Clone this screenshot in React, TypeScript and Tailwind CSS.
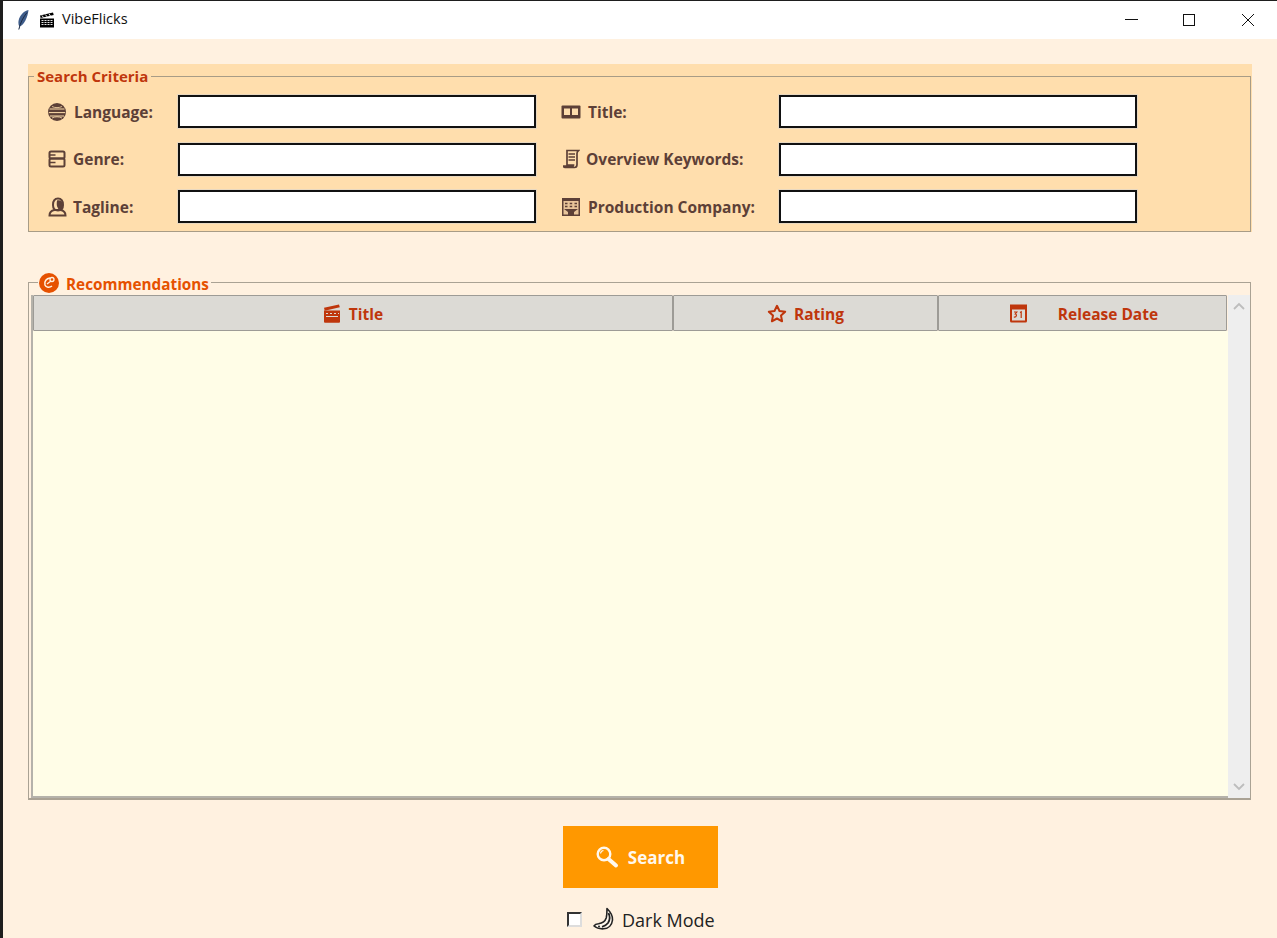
import React from "react";

const BROWN = "#5D4037";
const RED = "#BF360C";
const ORANGE = "#E65100";

function Globe() {
  return (
    <svg width="20" height="20" viewBox="0 0 20 20" fill="none">
      <circle cx="10" cy="10" r="9" fill={BROWN} />
      <path d="M2.500 7h15M1.800 10.600h16.400M3 14h14" stroke="#FFDEAD" strokeWidth="1" />
      <path d="M5 4.500C8 6 12 6 15 4.500M5 16c3-1.600 7-1.600 10 0" stroke="#FFDEAD" strokeWidth="0.800" />
    </svg>
  );
}
function Genre() {
  return (
    <svg width="18" height="18" viewBox="0 0 18 18" fill="none" stroke={BROWN} strokeWidth="2">
      <rect x="1.500" y="1.500" width="15" height="7" rx="1.500" />
      <rect x="1.500" y="8.500" width="15" height="8" rx="1.500" />
      <path d="M1.500 5h6M1.500 12.500h6" strokeWidth="1.500" />
    </svg>
  );
}
function Tagline() {
  return (
    <svg width="19" height="20" viewBox="0 0 19 20" fill="none">
      <path d="M5 8c0-4 2-6.500 5-6.500S15 4 15 8s-2 5.500-5 5.500S5 12 5 8z" fill="none" stroke={BROWN} strokeWidth="2" />
      <path d="M9 3.500c3-1 6 1 6 4.500 0 4-2 5-4 5-1-2.500-3-3-2-9.500z" fill={BROWN} />
      <path d="M1.500 18.500c0-3.500 2.500-5 5-5.500h6c2.500.5 5 2 5 5.500z" fill="none" stroke={BROWN} strokeWidth="2" />
    </svg>
  );
}
function Ticket() {
  return (
    <svg width="20" height="14" viewBox="0 0 20 14">
      <rect x="0.500" y="0.500" width="19" height="13" rx="1" fill={BROWN} />
      <rect x="3" y="3.500" width="6" height="6.500" fill="#FFDEAD" />
      <rect x="11" y="3.500" width="6" height="6.500" fill="#FFDEAD" />
    </svg>
  );
}
function Scroll() {
  return (
    <svg width="17" height="20" viewBox="0 0 17 20" fill="none" stroke={BROWN} strokeWidth="1.700">
      <path d="M4 1.500h11.500c-1.200 1-1.500 2-1.500 3v11c0 2-1 3-2.500 3H2c-1 0-1.500-.7-1.300-1.500h9.500c.3-.2.300-.8.300-1H4z" />
      <path d="M5.500 5h6.500M5.500 8h6.500M5.500 11h6.500" strokeWidth="1.300" />
    </svg>
  );
}
function Building() {
  return (
    <svg width="20" height="20" viewBox="0 0 20 20">
      <rect x="1" y="1" width="18" height="18" fill={BROWN} />
      <rect x="2.500" y="4" width="15" height="13.500" fill="#E8C49A" />
      <path d="M4 6.500h2.500M8.700 6.500h2.500M13.500 6.500H16M4 9.500h2.500M8.700 9.500h2.500M13.500 9.500H16" stroke={BROWN} strokeWidth="1.500" />
      <path d="M3 12h14l-4 3v3H7v-3z" fill={BROWN} />
    </svg>
  );
}
function Palette() {
  return (
    <svg width="20" height="20" viewBox="0 0 20 20">
      <circle cx="10" cy="10" r="10" fill={ORANGE} />
      <path d="M11 5C7.500 5.500 5 8 6 12c1 2.500 4.500 3 7 1" fill="none" stroke="#FFF1E0" strokeWidth="1.600" />
      <circle cx="13" cy="6.500" r="2" fill="none" stroke="#FFF1E0" strokeWidth="1.300" />
      <path d="M8 11l4-3" stroke="#FFF1E0" strokeWidth="1.300" />
    </svg>
  );
}
function Clapper() {
  return (
    <svg width="18" height="19" viewBox="0 0 18 19">
      <path d="M1 3.800L16 .5l.8 2.700L1.700 6.800z" fill={RED} />
      <path d="M1 6.500h16v11.200a1 1 0 0 1-1 1H2a1 1 0 0 1-1-1z" fill={RED} />
      <path d="M3 9.500h2M7 9.500h2M11 9.500h2M15 9.500h1M3 12.500h12" stroke="#DCDAD5" strokeWidth="1.100" />
    </svg>
  );
}
function Star() {
  return (
    <svg width="20" height="19" viewBox="0 0 20 19" fill="none">
      <path d="M10 1.800l2.500 5.200 5.700.7-4.200 3.900 1.100 5.700-5.100-2.800-5.100 2.800 1.100-5.700-4.200-3.900 5.700-.7z" stroke={RED} strokeWidth="2" strokeLinejoin="round" />
    </svg>
  );
}
function Calendar() {
  return (
    <svg width="19" height="20" viewBox="0 0 19 20">
      <path d="M1 1.500h17v16.500a1.500 1.500 0 0 1-1.500 1.500h-14A1.500 1.500 0 0 1 1 18z" fill={RED} />
      <rect x="3" y="6.500" width="13" height="11" fill="#DCDAD5" />
      <path d="M5 9h2.800l-1.500 2c1.600 0 1.800 3.500-1.500 3M11 9.500l1.200-.7V15" fill="none" stroke={RED} strokeWidth="1.200" />
    </svg>
  );
}
function Magnifier() {
  return (
    <svg width="24" height="24" viewBox="0 0 24 24" fill="none">
      <circle cx="9" cy="9" r="6.300" stroke="#FFF8EE" strokeWidth="2.400" />
      <path d="M13.500 14l7.500 6.500" stroke="#FFF8EE" strokeWidth="4" strokeLinecap="round" />
      <path d="M5.500 8.500c.3-1.700 1.500-2.800 3-3" stroke="#FFF8EE" strokeWidth="1.200" />
    </svg>
  );
}
function Moon() {
  return (
    <svg width="24" height="24" viewBox="0 0 24 24" fill="none">
      <path d="M15 1.500c2 2 6 6 5.500 11.500-.5 5-4 8.500-9 8.800-3.500.2-7-.7-9.500-2.800 1-1.500 2.500-2 4.500-2.200 4-.5 6.500-2 7.800-6 .7-3 .7-6.500.7-9.300z" fill="#FFF8EE" stroke="#222" strokeWidth="1.600" strokeLinejoin="round" />
      <path d="M16.500 6c1.500 3 1.500 7-.5 10-1.500 2-3.500 3-6 3.800" stroke="#222" strokeWidth="1.800" fill="none" />
      <circle cx="7" cy="19.500" r="1" fill="#222" />
    </svg>
  );
}
function Feather() {
  return (
    <svg width="14" height="22" viewBox="0 0 14 22">
      <path d="M12.500 1C8 2 3.500 6 2.500 12c-.3 2.500 0 4.500 1 5.500C8 16 11.500 9 12.500 1z" fill="#3E5C8A" />
      <path d="M11 3.500C7.500 8 4.500 13 2.800 20.500" stroke="#1B2A44" strokeWidth="1" fill="none" />
    </svg>
  );
}
function TitleClapper() {
  return (
    <svg width="16" height="16" viewBox="0 0 16 16">
      <path d="M1 3.500L14 .5l.7 2.600L1.600 6z" fill="#000" />
      <path d="M3 3.500l1.500 2M6.500 2.700l1.500 2M10 2l1.500 2" stroke="#fff" strokeWidth="1" />
      <path d="M1 6.500h14v9H1z" fill="#000" />
      <path d="M2.500 8.500h11M2.500 10.500h11M2.500 12.500h11" stroke="#fff" strokeWidth="0.900" strokeDasharray="2 1" />
    </svg>
  );
}

function Field({ icon, label, gap }: { icon: React.ReactNode; label: string; gap: string }) {
  return (
    <div className="flex items-center h-[33px]">
      <span className="flex items-center justify-center shrink-0 w-[20px]">{icon}</span>
      <span className={`${gap} pt-[2px] text-[15.500px] font-bold text-[#5D4037] whitespace-nowrap`}>{label}</span>
    </div>
  );
}

const Input = () => <div className="h-[33px] bg-white border-2 border-[#111] shadow-[0_0_0_1px_#e8d8c0]" />;

function Head({ icon, label, width, gap }: { icon: React.ReactNode; label: string; width: string; gap: string }) {
  return (
    <div className={`${width} ${gap} h-full flex items-center justify-center bg-[#DCDAD5] border border-[#9d9b96] rounded-[1px] text-[15.500px] font-bold text-[#BF360C]`}>
      {icon}
      <span className="pt-[4px]">{label}</span>
    </div>
  );
}

export default function App() {
  return (
    <div className="w-[1277px] h-[938px] overflow-hidden flex bg-[#1e1e1e] font-['Open_Sans','Noto_Sans',sans-serif]">
      <div className="w-[3px] shrink-0 bg-[#1e1e1e]" />
      <div className="flex-1 flex flex-col pt-px">
        <div className="h-[38px] shrink-0 bg-white flex items-center">
          <span className="ml-[13px] flex"><Feather /></span>
          <span className="ml-[9px] flex"><TitleClapper /></span>
          <span className="ml-[7px] pb-[2px] text-[14.500px] text-[#111]">VibeFlicks</span>
          <div className="ml-auto flex items-center">
            <svg width="14" height="14" viewBox="0 0 14 14" className="mr-[44px]"><path d="M0 6.500h13" stroke="#111" /></svg>
            <svg width="14" height="14" viewBox="0 0 14 14" className="mr-[44px]"><rect x="0.500" y="1.500" width="11" height="11" fill="none" stroke="#111" /></svg>
            <svg width="14" height="14" viewBox="0 0 14 14" className="mr-[22px]"><path d="M1 1l12 12M13 1L1 13" stroke="#111" /></svg>
          </div>
        </div>

        <div className="flex-1 bg-[#FFF1E0] px-[25px] pt-[25px] flex flex-col">
          <div className="relative h-[168px] bg-[#FFDEAD] pt-3 shrink-0">
            <div className="absolute left-[6px] top-[1px] bg-[#FFDEAD] px-[3px] text-[15px] leading-[22px] font-bold text-[#BF360C]">Search Criteria</div>
            <div className="h-[156px] mr-px border border-[#a89c86] pl-[18px] pt-[18px] grid grid-cols-[131px_358px_243px_358px] grid-rows-[33px_33px_33px] gap-y-[14.500px]">
              <Field icon={<Globe />} gap="ml-[7px]" label="Language:" />
              <Input />
              <div className="ml-[25px]"><Field icon={<Ticket />} gap="ml-[7px]" label="Title:" /></div>
              <Input />
              <Field icon={<Genre />} gap="ml-[6px]" label="Genre:" />
              <Input />
              <div className="ml-[25px]"><Field icon={<Scroll />} gap="ml-[5px]" label="Overview Keywords:" /></div>
              <Input />
              <Field icon={<Tagline />} gap="ml-[6px]" label="Tagline:" />
              <Input />
              <div className="ml-[25px]"><Field icon={<Building />} gap="ml-[7px]" label="Production Company:" /></div>
              <Input />
            </div>
          </div>

          <div className="relative mt-[50px] h-[518px] mr-px border border-[#aaa294] border-b-2 shrink-0 flex pl-[2px] pt-[12px]">
            <div className="absolute left-[9px] top-[-12px] bg-[#FFF1E0] pl-px pr-[2px] flex items-center gap-[7px] text-[15.300px] leading-[22px] font-bold text-[#E65100]">
              <Palette />
              <span className="pt-[2px]">Recommendations</span>
            </div>
            <div className="w-[1197px] flex flex-col border-2 border-t-0 border-r-0 border-[#b5b2aa]">
              <div className="h-[36px] flex shrink-0">
                <Head icon={<Clapper />} label="Title" width="w-[640px]" gap="gap-[8px]" />
                <Head icon={<Star />} label="Rating" width="w-[265px]" gap="gap-[7px]" />
                <Head icon={<Calendar />} label="Release Date" width="w-[289px] pl-[2px]" gap="gap-[30px]" />
              </div>
              <div className="flex-1 bg-[#FFFDE7]" />
            </div>
            <div className="flex-1 bg-[#EEEEEE] flex flex-col items-center justify-between py-[7px]">
              <svg width="12" height="8" viewBox="0 0 12 8" fill="none"><path d="M1 7l5-5 5 5" stroke="#bdbdbd" strokeWidth="1.800" /></svg>
              <svg width="12" height="8" viewBox="0 0 12 8" fill="none"><path d="M1 1l5 5 5-5" stroke="#bdbdbd" strokeWidth="1.800" /></svg>
            </div>
          </div>

          <div className="mt-[26px] self-center w-[155px] h-[62px] shrink-0 bg-[#FF9800] flex items-center justify-center gap-[9px] text-[17px] font-bold text-[#FFF8EE]">
            <Magnifier />
            <span className="pt-[2px]">Search</span>
          </div>

          <div className="mt-[19px] ml-[539px] flex items-center h-[24px] text-[18px] text-[#222]">
            <span className="w-[15px] h-[15px] bg-white border-2 border-[#333] border-r-[#ddd] border-b-[#ddd] shrink-0" />
            <span className="ml-[10px] flex"><Moon /></span>
            <span className="ml-[6px] pt-[2px]">Dark Mode</span>
          </div>
        </div>
      </div>
    </div>
  );
}
